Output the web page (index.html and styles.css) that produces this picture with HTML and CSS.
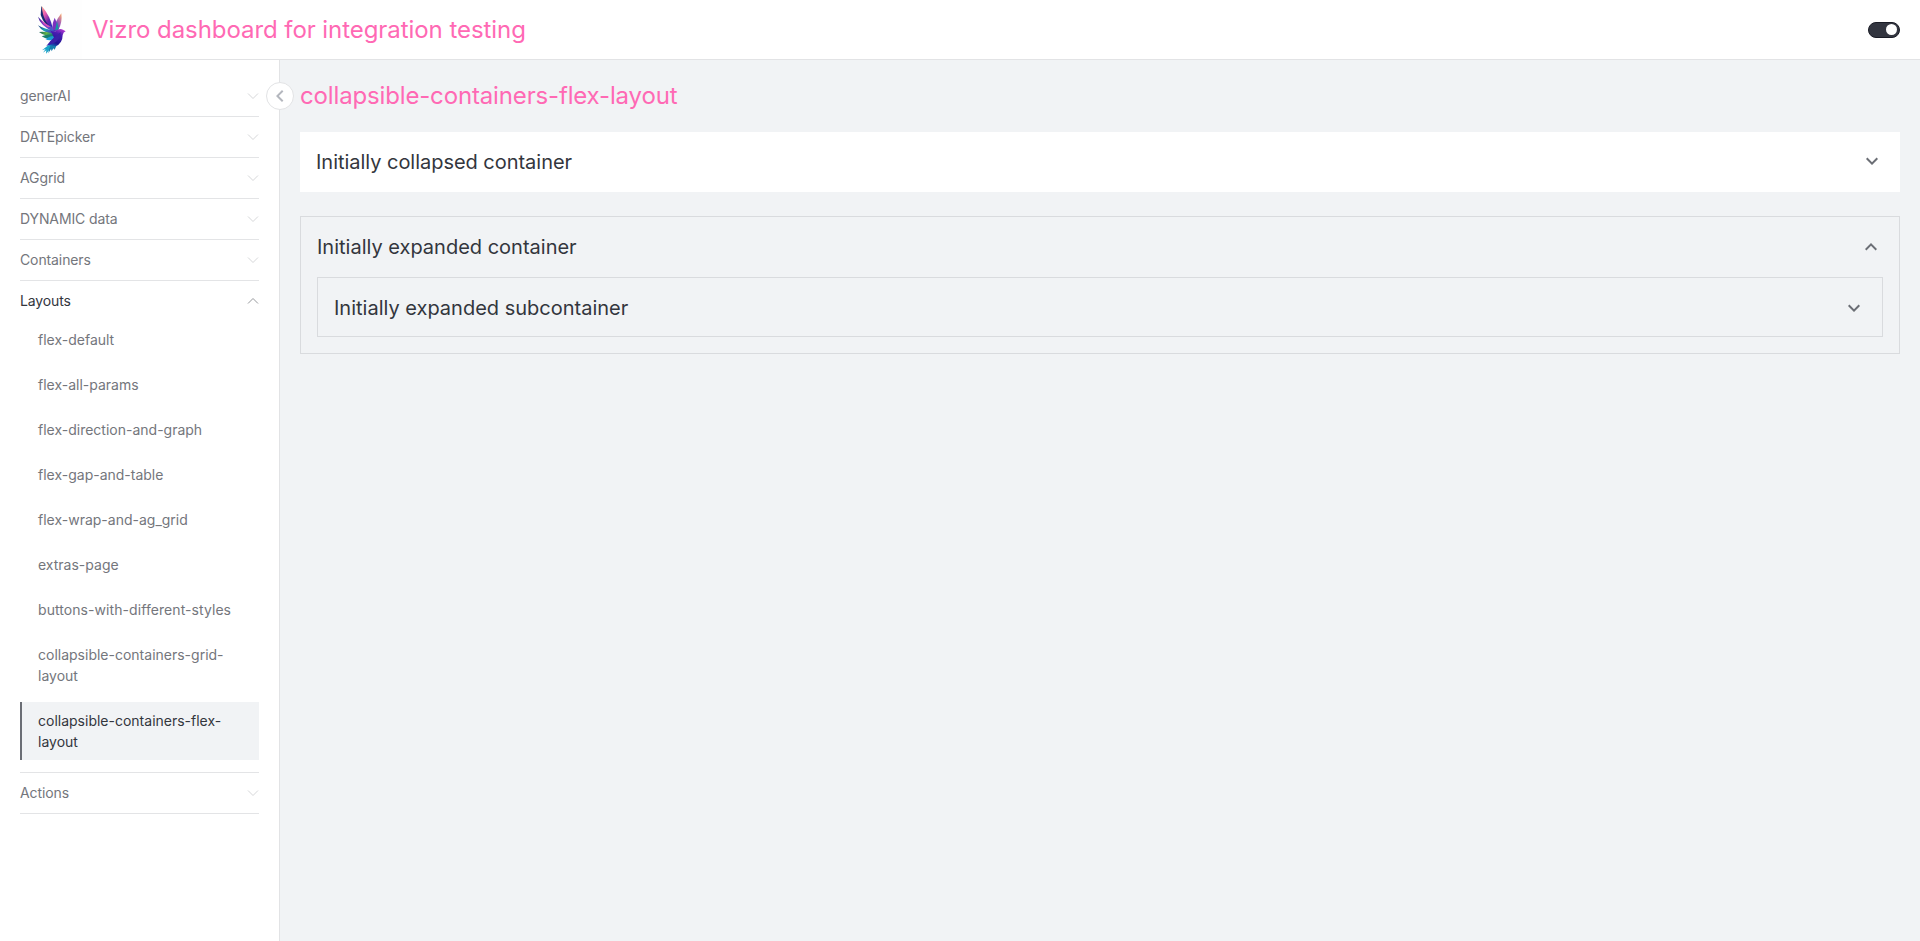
FILE: index.html
```html
<!DOCTYPE html>
<html lang="en">
<head>
<meta charset="utf-8">
<title>Vizro dashboard for integration testing</title>
<link rel="stylesheet" href="styles.css">
</head>
<body>
<header class="header">
  <svg class="logo" viewBox="60 0 186 177">
    <defs>
      <linearGradient id="w1" x1="0" y1="0" x2=".8" y2="1"><stop offset="0" stop-color="#f6b58f"/><stop offset=".35" stop-color="#ee5fae"/><stop offset=".7" stop-color="#6a25b0"/><stop offset="1" stop-color="#2a2bb5"/></linearGradient>
      <linearGradient id="w2" x1="0" y1="0" x2="1" y2="1"><stop offset="0" stop-color="#3a2a94"/><stop offset=".45" stop-color="#8a36cf"/><stop offset="1" stop-color="#1d6fc0"/></linearGradient>
      <linearGradient id="w3" x1="0" y1="0" x2="1" y2=".6"><stop offset="0" stop-color="#1f3a7c"/><stop offset=".5" stop-color="#18a3b5"/><stop offset="1" stop-color="#5b2cc0"/></linearGradient>
      <linearGradient id="w4"><stop offset="0" stop-color="#17645f"/><stop offset=".5" stop-color="#62b544"/><stop offset="1" stop-color="#177e92"/></linearGradient>
      <linearGradient id="bd" x1=".8" y1="0" x2=".3" y2="1"><stop offset="0" stop-color="#b43ad0"/><stop offset=".3" stop-color="#4a1bb2"/><stop offset=".75" stop-color="#1c1591"/><stop offset="1" stop-color="#1479bd"/></linearGradient>
      <linearGradient id="rw" x1=".8" y1="0" x2=".2" y2="1"><stop offset="0" stop-color="#f3a577"/><stop offset=".4" stop-color="#a45fb8"/><stop offset="1" stop-color="#3734b8"/></linearGradient>
    </defs>
    <path fill="url(#rw)" d="M184 40Q188 68 174 92L158 94Q164 66 184 40Z"/>
    <path fill="#7b32c0" d="M164 53Q174 73 170 92L156 88Q157 68 164 53Z"/>
    <path fill="#1596a2" d="M171 64L176 88L165 91Z"/>
    <path fill="#152b72" d="M124 18L122 45Q132 75 157 87L146 59Z"/>
    <path fill="url(#w1)" d="M125 18Q151 48 158 84Q130 69 125 18Z"/>
    <path fill="url(#w2)" d="M114 50Q119 76 165 98L153 79Q134 72 114 50Z"/>
    <path fill="#d753b7" d="M121 58Q133 69 151 80L144 82Q128 72 121 58Z"/>
    <path fill="url(#w3)" d="M114 76Q132 87 165 93L160 103Q129 99 114 76Z"/>
    <path fill="url(#w4)" d="M117 96Q140 94 162 101L160 109Q135 109 117 96Z"/>
    <path fill="#19806d" d="M125 109Q142 101 165 103L158 114Q139 119 125 109Z"/>
    <path fill="#1b9bd0" d="M136 117Q149 107 169 107L158 119Q147 124 136 117Z"/>
    <path fill="url(#bd)" d="M151 91Q161 99 171 91Q180 84 189 89L197 94Q190 96 188 105Q188 131 165 140L143 142Q149 125 162 113Z"/>
    <path fill="#3a20a8" d="M151 123L182 96Q184 119 157 132L139 138Z"/>
    <path fill="#18a3c8" d="M145 136L157 138Q147 152 138 161L139 151L129 158L137 147L126 151Z"/>
    <path fill="#167eac" d="M151 137L169 138L164 149L160 145L155 154L153 147L145 160L147 148Z"/>
  </svg>
  <h1 class="brand">Vizro dashboard for integration testing</h1>
  <div class="switch"><span class="knob"></span></div>
</header>
<div class="body">
  <nav class="nav">
    <div class="group"><span>generAI</span><svg class="caret" viewBox="0 0 12 12"><path d="M1 3.5L6 8.5L11 3.5"/></svg></div>
    <div class="group"><span>DATEpicker</span><svg class="caret" viewBox="0 0 12 12"><path d="M1 3.5L6 8.5L11 3.5"/></svg></div>
    <div class="group"><span>AGgrid</span><svg class="caret" viewBox="0 0 12 12"><path d="M1 3.5L6 8.5L11 3.5"/></svg></div>
    <div class="group"><span>DYNAMIC data</span><svg class="caret" viewBox="0 0 12 12"><path d="M1 3.5L6 8.5L11 3.5"/></svg></div>
    <div class="group"><span>Containers</span><svg class="caret" viewBox="0 0 12 12"><path d="M1 3.5L6 8.5L11 3.5"/></svg></div>
    <div class="group open"><span>Layouts</span><svg class="caret" viewBox="0 0 12 12"><path d="M1 8.5L6 3.5L11 8.5"/></svg></div>
    <div class="links">
      <a class="link">flex-default</a>
      <a class="link">flex-all-params</a>
      <a class="link">flex-direction-and-graph</a>
      <a class="link">flex-gap-and-table</a>
      <a class="link">flex-wrap-and-ag_grid</a>
      <a class="link">extras-page</a>
      <a class="link loose">buttons-with-different-styles</a>
      <a class="link">collapsible-containers-grid-layout</a>
      <a class="link active">collapsible-containers-flex-layout</a>
    </div>
    <div class="group"><span>Actions</span><svg class="caret" viewBox="0 0 12 12"><path d="M1 3.5L6 8.5L11 3.5"/></svg></div>
    <div class="collapse"><svg viewBox="0 0 24 24"><path d="M15.41 7.41L14 6l-6 6 6 6 1.41-1.41L10.83 12z"/></svg></div>
  </nav>
  <main class="main">
    <h2 class="page-title">collapsible-containers-flex-layout</h2>
    <section class="card filled">
      <h3 class="card-title"><span>Initially collapsed container</span><svg class="chevron" viewBox="0 0 24 24"><path d="M16.59 8.59L12 13.17 7.41 8.59 6 10l6 6 6-6z"/></svg></h3>
    </section>
    <section class="card outlined">
      <h3 class="card-title"><span>Initially expanded container</span><svg class="chevron" viewBox="0 0 24 24"><path d="M12 8l-6 6 1.41 1.41L12 10.83l4.59 4.58L18 14z"/></svg></h3>
      <section class="card outlined nested">
        <h3 class="card-title"><span>Initially expanded subcontainer</span><svg class="chevron" viewBox="0 0 24 24"><path d="M16.59 8.59L12 13.17 7.41 8.59 6 10l6 6 6-6z"/></svg></h3>
      </section>
    </section>
  </main>
</div>
</body>
</html>
```

FILE: styles.css
```css
* { box-sizing: border-box; }
body {
  margin: 0;
  height: 941px;
  display: flex;
  flex-direction: column;
  background: #f1f3f5;
  font-family: Inter, "Liberation Sans", sans-serif;
  font-size: 14px;
  color: #33363d;
}
h1, h2, h3 { margin: 0; font-weight: 400; }
.header {
  height: 60px;
  display: flex;
  align-items: center;
  padding: 0 20px;
  background: #fff;
  border-bottom: 1px solid #e2e3e5;
}
.logo { width: 62px; height: 59px; background: #fefefe; }
.brand {
  margin-left: 10px;
  font-size: 24px;
  line-height: 32px;
  letter-spacing: -0.065px;
  color: #ff69b4;
}
.switch {
  width: 32px;
  height: 16px;
  margin-left: auto;
  padding: 2px;
  border: 1px solid #1a1c26;
  border-radius: 8px;
  background: #333640;
  display: flex;
  align-items: center;
  justify-content: flex-end;
}
.knob { width: 11px; height: 11px; border-radius: 50%; background: #fff; }
.body { flex: 1; display: flex; }
.nav {
  position: relative;
  width: 280px;
  padding: 16px 20px;
  background: #fff;
  border-right: 1px solid #e2e3e5;
}
.group {
  height: 41px;
  display: flex;
  align-items: center;
  justify-content: space-between;
  padding-bottom: 1px;
  border-bottom: 1px solid #e3e4e6;
  letter-spacing: -0.11px;
  color: #74767c;
}
.group.open { height: 40px; border-bottom: 0; color: #33363d; }
.caret { width: 12px; height: 12px; fill: none; stroke: #d6d7d9; stroke-width: 1; }
.open .caret { stroke: #96989c; }
.links {
  display: flex;
  flex-direction: column;
  gap: 8px;
  padding-bottom: 12px;
  border-bottom: 1px solid #e3e4e6;
}
.link {
  padding: 8px 16px;
  border-left: 2px solid transparent;
  line-height: 21px;
  color: #74767c;
}
.link.loose { letter-spacing: 0.07px; }
.link.active { background: #f1f3f5; border-left-color: #6b6e75; color: #33363d; }
.collapse {
  position: absolute;
  top: 22px;
  right: -15px;
  width: 28px;
  height: 28px;
  display: flex;
  align-items: center;
  justify-content: center;
  border: 1px solid #e2e3e5;
  border-radius: 50%;
  background: #fff;
}
.collapse svg { width: 24px; height: 24px; fill: #b4b7be; }
.main { flex: 1; padding: 20px; }
.page-title { height: 32px; font-size: 24px; line-height: 32px; letter-spacing: -0.15px; color: #ff69b4; }
.card-title {
  display: flex;
  align-items: center;
  justify-content: space-between;
  height: 60px;
  font-size: 20px;
  line-height: 24px;
}
.chevron { width: 24px; height: 24px; fill: #6b6e75; }
.filled { margin-top: 20px; padding: 0 16px; background: #fff; }
.filled .card-title { letter-spacing: -0.03px; }
.filled .chevron { margin-bottom: 2px; }
.outlined { margin-top: 24px; padding: 0 16px 16px; border: 1px solid #d9dbde; }
.outlined.nested { margin-top: 0; padding-bottom: 0; }
.nested .card-title { height: 58px; padding-top: 2px; }
```
